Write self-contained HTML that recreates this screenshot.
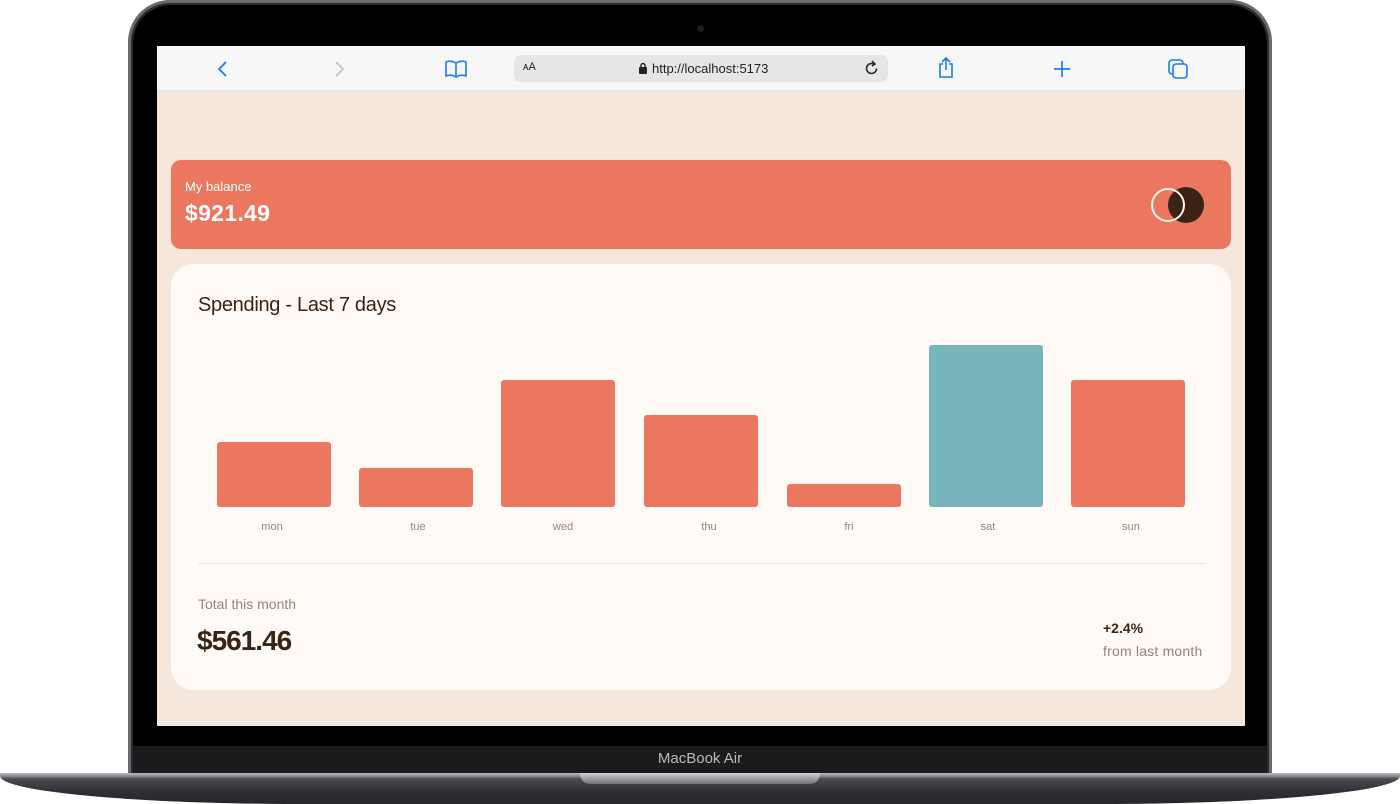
<!DOCTYPE html>
<html><head><meta charset="utf-8"><style>
*{margin:0;padding:0;box-sizing:border-box}
body{width:1400px;height:804px;background:#fff;position:relative;overflow:hidden;font-family:"Liberation Sans",sans-serif}
.a{position:absolute}
.lid{left:128px;top:0;width:1144px;height:778px;border-radius:42px 42px 0 0;background:#2c2c2e;border:3px solid #6a6a6e}
.bez{left:133px;top:5px;width:1134px;height:770px;border-radius:38px 38px 0 0;background:#000}
.chin{left:133px;top:746px;width:1134px;height:28px;background:#1b1b1d}
.base{left:0;top:773px;width:1400px;height:31px;background:linear-gradient(#b9babe 0,#8e8f94 3px,#4a4b50 6px,#2f3035 18px,#25262b);border-radius:0 0 300px 300px/0 0 28px 28px}
.notch{left:580px;top:773px;width:240px;height:11px;background:linear-gradient(#d0d1d4,#6f7075);border-radius:0 0 10px 10px}
.screen{left:157px;top:46px;width:1088px;height:680px;background:#f5e7dc;overflow:hidden}
.tb{left:0;top:0;width:1088px;height:45px;background:#f7f7f7;border-bottom:1px solid #e4e4e4}
.url{left:357px;top:9px;width:374px;height:27px;background:#e6e6e6;border-radius:7px;font-size:13px;color:#222}
.bal{left:14px;top:114px;width:1060px;height:89px;background:#ec775f;border-radius:10px;color:#fff}
.card{left:14px;top:218px;width:1060px;height:426px;background:#fffaf5;border-radius:22px}
.bar{position:absolute;background:#ec775f;border-radius:3px;width:114px;bottom:0}
.lbl{position:absolute;top:474px;font-size:11px;color:#93867b;transform:translateX(-50%)}
</style></head><body>
<div class="a lid"></div><div class="a bez"></div>
<div class="a" style="left:697px;top:25px;width:7px;height:7px;border-radius:50%;background:#1c1c24"></div>
<div class="a chin"></div>
<div class="a" style="left:0;top:750px;width:1400px;text-align:center;color:#bbb;font-size:15px">MacBook Air</div>
<div class="a base"></div><div class="a notch"></div>
<div class="a screen">
 <div class="a tb">
  <svg class="a" style="left:58px;top:13px" width="16" height="20"><path d="M11 3 4 10l7 7" stroke="#1a7cf0" stroke-width="1.8" fill="none"/></svg>
  <svg class="a" style="left:174px;top:13px" width="16" height="20"><path d="M5 3l7 7-7 7" stroke="#c4c4c4" stroke-width="1.8" fill="none"/></svg>
  <svg class="a" style="left:287px;top:13px" width="24" height="20"><path d="M2 3q5-2 10 1v14q-5-3-10-1zM12 4q5-3 10-1v14q-5-2-10 1" stroke="#1a7cf0" stroke-width="1.6" fill="none"/></svg>
  <div class="a url"><span class="a" style="left:9px;top:6px;font-size:11px">ᴀA</span>
   <svg class="a" style="left:124px;top:7px" width="10" height="13"><rect x="1" y="5" width="8" height="7" rx="1" fill="#222"/><path d="M3 5V3.5a2 2 0 0 1 4 0V5" stroke="#222" stroke-width="1.4" fill="none"/></svg>
   <span class="a" style="left:138px;top:6px">http://localhost:5173</span>
   <svg class="a" style="left:350px;top:5px" width="16" height="17"><path d="M12.5 8.5a5 5 0 1 1-3-4.6" stroke="#222" stroke-width="1.5" fill="none"/><path d="M8 1l3 3-3 2" stroke="#222" stroke-width="1.5" fill="none"/></svg>
  </div>
  <svg class="a" style="left:779px;top:10px" width="20" height="24"><path d="M7 8H4v13h12V8h-3M10 14V2M6 6l4-4 4 4" stroke="#1a7cf0" stroke-width="1.6" fill="none"/></svg>
  <svg class="a" style="left:895px;top:13px" width="20" height="20"><path d="M10 2v16M2 10h16" stroke="#1a7cf0" stroke-width="1.7"/></svg>
  <svg class="a" style="left:1011px;top:13px" width="22" height="22"><rect x="1" y="1" width="14" height="14" rx="3" stroke="#1a7cf0" stroke-width="1.6" fill="none"/><rect x="5" y="5" width="14" height="14" rx="3" stroke="#1a7cf0" stroke-width="1.6" fill="#f7f7f7"/></svg>
 </div>
 <div class="a bal">
  <div class="a" style="left:14px;top:19px;font-size:13px">My balance</div>
  <div class="a" style="left:14px;top:40px;font-size:23px;font-weight:bold;letter-spacing:0.3px">$921.49</div>
  <div class="a" style="left:997px;top:27px;width:36px;height:36px;border-radius:50%;background:#3b2416"></div>
  <div class="a" style="left:980px;top:28px;width:34px;height:34px;border-radius:50%;border:2px solid #fff6ee"></div>
 </div>
 <div class="a card">
  <div class="a" style="left:27px;top:30px;font-size:20px;color:#382314;letter-spacing:-0.3px">Spending - Last 7 days</div>
  <div class="a" style="left:0;top:0;width:1060px;height:243px">
   <div class="bar" style="left:46px;height:65px"></div>
   <div class="bar" style="left:188px;height:39px"></div>
   <div class="bar" style="left:330px;height:127px"></div>
   <div class="bar" style="left:473px;height:92px"></div>
   <div class="bar" style="left:616px;height:23px"></div>
   <div class="bar" style="left:758px;height:162px;background:#76b5bc"></div>
   <div class="bar" style="left:900px;height:127px"></div>
  </div>
  <div class="lbl" style="left:101px;top:257px">mon</div>
  <div class="lbl" style="left:247px;top:257px">tue</div>
  <div class="lbl" style="left:392px;top:257px">wed</div>
  <div class="lbl" style="left:538px;top:257px">thu</div>
  <div class="lbl" style="left:678px;top:257px">fri</div>
  <div class="lbl" style="left:817px;top:257px">sat</div>
  <div class="lbl" style="left:960px;top:257px">sun</div>
  <div class="a" style="left:27px;top:299px;width:1006px;height:1px;background:#ece3db"></div>
  <div class="a" style="left:27px;top:332px;font-size:14px;color:#93867b">Total this month</div>
  <div class="a" style="left:26px;top:361px;font-size:28px;font-weight:bold;color:#382314;letter-spacing:-1px">$561.46</div>
  <div class="a" style="left:932px;top:356px;font-size:14px;font-weight:bold;color:#382314">+2.4%</div>
  <div class="a" style="left:932px;top:379px;font-size:14px;color:#93867b;letter-spacing:0.2px">from last month</div>
 </div>
</div>
</body></html>
